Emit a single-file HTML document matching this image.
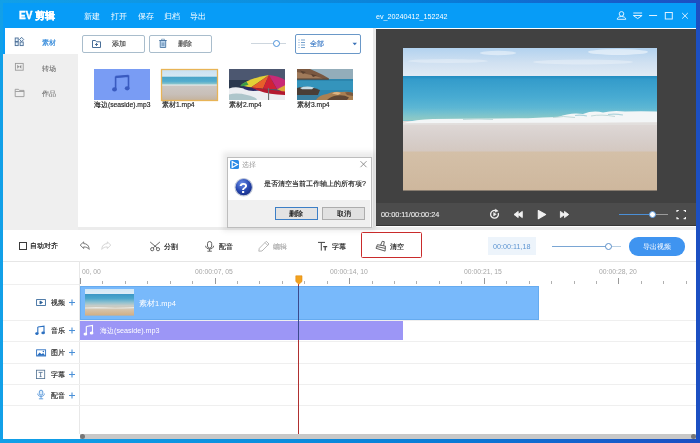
<!DOCTYPE html>
<html><head><meta charset="utf-8">
<style>
*{box-sizing:border-box;margin:0;padding:0}
html,body{width:700px;height:443px;overflow:hidden}
body{position:relative;font-family:"Liberation Sans",sans-serif;background:linear-gradient(90deg,#12a0e8 0%,#0c8ede 40%,#0a7ad6 65%,#1660cc 85%,#1c4fc2 100%);color:#333}
.a{position:absolute}
.t{position:absolute;white-space:nowrap;line-height:1;will-change:transform;-webkit-text-stroke:0.15px currentColor}
svg{position:absolute;overflow:visible}
.btn{position:absolute;border:1px solid #a9bdcc;border-radius:2px;background:#fff}
.rl{position:absolute;left:3px;width:693px;height:1px;background:#efefef}
.tk{position:absolute;top:281px;width:1px;height:3px;background:#b0b0b0}
.tK{position:absolute;top:278px;width:1px;height:6px;background:#999}
.rt{position:absolute;top:268.5px;font-size:6.8px;color:#a6a6a6;white-space:nowrap;line-height:1;will-change:transform}
</style></head><body>
<!-- window -->
<div class="a" style="left:3px;top:3px;width:693px;height:436px;background:#fff"></div>
<!-- title bar -->
<div class="a" style="left:3px;top:3px;width:693px;height:25px;background:#079cf7"></div>
<div class="t" style="left:19.3px;top:11px;font-size:10px;font-weight:bold;color:#fff;-webkit-text-stroke:0.35px #fff">EV 剪辑</div>
<div class="t" style="left:84px;top:13px;font-size:7.5px;color:#fff;-webkit-text-stroke:0">新建</div>
<div class="t" style="left:111px;top:13px;font-size:7.5px;color:#fff;-webkit-text-stroke:0">打开</div>
<div class="t" style="left:137.5px;top:13px;font-size:7.5px;color:#fff;-webkit-text-stroke:0">保存</div>
<div class="t" style="left:164px;top:13px;font-size:7.5px;color:#fff;-webkit-text-stroke:0">归档</div>
<div class="t" style="left:190px;top:13px;font-size:7.5px;color:#fff;-webkit-text-stroke:0">导出</div>
<div class="t" style="left:376.3px;top:13px;font-size:7.2px;color:#fff;-webkit-text-stroke:0">ev_20240412_152242</div>
<svg width="700" height="30" style="left:0;top:0" fill="none" stroke="#dff1ff" stroke-width="1">
  <circle cx="621.5" cy="13.9" r="2.3"/>
  <path d="M617.2 19.3 C617.2 15.6 625.8 15.6 625.8 19.3 Z"/>
  <path d="M633.3 13 H642.1 M633.3 15.5 H642.1 L637.7 18.6 Z"/>
  <path d="M649.1 15.5 H657.1"/>
  <rect x="665.3" y="12.5" width="7" height="6.5"/>
  <path d="M682.2 13 L687.8 18.6 M687.8 13 L682.2 18.6"/>
</svg>

<!-- sidebar -->
<div class="a" style="left:3px;top:28px;width:75px;height:202px;background:#efefef"></div>
<div class="a" style="left:3px;top:28px;width:75px;height:26px;background:#fff"></div>
<div class="a" style="left:3px;top:28px;width:2px;height:26px;background:#079cf7"></div>
<svg width="30" height="80" style="left:0;top:0" fill="none" stroke-width="0.9">
  <g stroke="#4a6d96" fill="#eaf5fd">
    <rect x="15.2" y="38" width="3" height="3.6"/>
    <rect x="15.2" y="42" width="3" height="3.6"/>
    <path d="M21.6 37.3 L23.7 39.5 L21.6 41.6 L19.5 39.5 Z"/>
    <rect x="20.1" y="42" width="3.1" height="3.6"/>
  </g>
  <g stroke="#9a9a9a">
    <rect x="15.4" y="63.4" width="7.8" height="6.8"/>
    <path d="M17.3 64.8 V68.8 L19.2 66.8 Z M21.3 64.8 V68.8 L19.4 66.8 Z" fill="#8a8a8a" stroke="none"/>
    <path d="M15.2 89.3 H18.5 L19.5 90.4 H24 V96.6 H15.2 Z M15.2 91.5 H24"/>
  </g>
</svg>
<div class="t" style="left:42.2px;top:39px;font-size:7px;color:#2a84d8">素材</div>
<div class="t" style="left:42.2px;top:64.6px;font-size:7px;color:#666;-webkit-text-stroke:0.05px #666">转场</div>
<div class="t" style="left:42.2px;top:90px;font-size:7px;color:#666;-webkit-text-stroke:0.05px #666">作品</div>

<!-- media panel -->
<div class="a" style="left:372.5px;top:28px;width:3.5px;height:202px;background:#e9e9e9"></div>
<div class="a" style="left:78px;top:226.7px;width:618px;height:3.2px;background:#ececec"></div>
<div class="btn" style="left:82px;top:35px;width:63px;height:17.8px"></div>
<div class="btn" style="left:149px;top:35px;width:63px;height:17.8px"></div>
<div class="t" style="left:111.6px;top:40.3px;font-size:7px;color:#444">添加</div>
<div class="t" style="left:178px;top:40.3px;font-size:7px;color:#444">删除</div>
<svg width="120" height="20" style="left:80px;top:35px" fill="none" stroke-width="1">
  <path d="M12.5 5.5 H15.5 L16.5 6.8 H20.5 V12.5 H12.5 Z" stroke="#4a6f98"/>
  <path d="M16.5 8 V11 M15 9.5 H18" stroke="#4a6f98"/>
  <path d="M79.2 5.5 H86.7" stroke="#4f7aa6" stroke-width="1"/>
  <path d="M81.5 5 V4.2 H84.5 V5" stroke="#6f95bb" stroke-width="0.8"/>
  <path d="M80.2 6 V12.5 H85.7 V6" stroke="#4f7aa6" fill="#bcd6ee" stroke-width="0.9"/>
  <path d="M82.2 7.5 V11 M83.8 7.5 V11" stroke="#4f7aa6" stroke-width="0.7"/>
</svg>
<!-- zoom slider -->
<div class="a" style="left:251px;top:43px;width:35px;height:1.4px;background:#cdd6de"></div>
<div class="a" style="left:272.8px;top:40px;width:7.2px;height:7.2px;border:1.2px solid #4a90d9;border-radius:50%;background:#fff"></div>
<!-- dropdown -->
<div class="btn" style="left:295px;top:34px;width:65.6px;height:19.6px;border-color:#6a98c8"></div>
<svg width="70" height="20" style="left:295px;top:34px" fill="none" stroke="#6a98c8" stroke-width="0.9">
  <path d="M3.5 6 H4.5 M3.5 8.5 H4.5 M3.5 11 H4.5 M3.5 13.5 H4.5 M6 6 H10 M6 8.5 H10 M6 11 H10 M6 13.5 H10"/>
  <path d="M57.5 8.8 L62 8.8 L59.75 11.3 Z" fill="#3a72b8" stroke="none"/>
</svg>
<div class="t" style="left:310px;top:40.3px;font-size:7px;color:#3274c4">全部</div>

<!-- thumbnails -->
<div class="a" style="left:94px;top:69px;width:56px;height:31px;background:#799cf4"></div>
<svg width="56" height="31" style="left:94px;top:69px">
  <path d="M21.6 20 V8.2 L34.5 7.2 V19" stroke="#3a5bc0" stroke-width="1.6" fill="none"/>
  <path d="M21.6 7.8 L34.5 6.8" stroke="#3a5bc0" stroke-width="2" fill="none"/>
  <ellipse cx="20.5" cy="20.4" rx="2.4" ry="2.1" fill="#3a5bc0"/>
  <ellipse cx="33.2" cy="19.3" rx="2.4" ry="2.1" fill="#3a5bc0"/>
</svg>
<svg width="57" height="32" style="left:161px;top:68.5px">
  <defs>
    <linearGradient id="t1" x1="0" y1="0" x2="0" y2="1">
      <stop offset="0" stop-color="#c8e0f2"/><stop offset="0.22" stop-color="#d6e8f3"/>
      <stop offset="0.24" stop-color="#4aa4c8"/><stop offset="0.38" stop-color="#52acce"/>
      <stop offset="0.46" stop-color="#84c2cc"/><stop offset="0.5" stop-color="#e2eaea"/>
      <stop offset="0.54" stop-color="#ccc6c2"/><stop offset="0.8" stop-color="#c8bfb8"/>
      <stop offset="1" stop-color="#c4b29c"/>
    </linearGradient>
  </defs>
  <rect x="0.5" y="0.5" width="56" height="31" fill="url(#t1)" stroke="#e8b456" stroke-width="1.3"/>
</svg>
<svg width="56" height="31" style="left:229px;top:69px">
  <rect width="56" height="31" fill="#4c5770"/>
  <rect y="11" width="56" height="9" fill="#2b394e"/>
  <path d="M0 19.5 Q6 17.5 12 19 T24 20 T40 21.5 T56 21 V31 H0 Z" fill="#eceef1"/>
  <path d="M0 25.5 Q8 23.5 18 26 T28 31 H0 Z" fill="#9ab8be" opacity="0.75"/>
  <path d="M40 6 Q22 8.5 11.5 16.5 L22 18.5 Z" fill="#e2cf36"/>
  <path d="M11.5 16.5 Q14 14 17.5 12.8 L19.5 15.8 L13 17.6 Z" fill="#3a9a48"/>
  <path d="M40 6 L22 18.5 L34 19.8 Z" fill="#e85e2a"/>
  <path d="M40 6 L34 19.8 L48 20.3 Z" fill="#d02236"/>
  <path d="M40 6 Q50 7 56 11 V17 L48 20.3 Z" fill="#c82a76"/>
  <path d="M48 20.3 L56 16.2 V23.5 Z" fill="#e0a83a"/>
  <path d="M12.5 17.2 L22 18.5 L31 21.2 Q22 23 15.5 20.2 Z" fill="#2c2a66"/>
  <path d="M22 18.5 L56 22.5 V26 Q40 25.5 30 21.8 Z" fill="#b41a30"/>
  <rect x="39" y="19" width="1.1" height="12" fill="#707070"/>
</svg>
<svg width="56" height="31" style="left:297px;top:69px">
  <rect width="56" height="31" fill="#2c86ae"/>
  <rect width="56" height="10" fill="#93adba"/>
  <rect y="12" width="56" height="9" fill="#3494bc"/>
  <path d="M0 0 H13 Q20 3 26 6 L32 9.5 L31 10.5 H0 Z" fill="#7a5840"/>
  <path d="M0 3 Q10 5 18 7 L26 9.5 H0 Z" fill="#a07a5a"/>
  <path d="M3 1.5 L9 3 L6 5 Z M14 5 L20 6.5 L16 8 Z" fill="#5a4030"/>
  <rect y="9.6" width="32" height="1.2" fill="#3a3a38" opacity="0.6"/>
  <path d="M0 19 Q6 17 12 18 Q18 19 23 21 L21 26 H0 Z" fill="#4a3e36"/>
  <path d="M3 19 Q9 16.5 17 18.5 L15 20.2 H5 Z" fill="#c8dce4"/>
  <path d="M0 26 H22 L20 31 H0 Z" fill="#3a7e9e"/>
  <path d="M19 31 Q22 26 30 25 Q36 22 44 23 Q52 22 56 24 V31 Z" fill="#a98052"/>
  <path d="M30 31 Q34 27 40 26.5 Q47 25.5 52 28.5 L50 31 Z" fill="#5e4634"/>
  <path d="M35 24.5 Q39 22 44 24 L41 26 Z" fill="#dcb482"/>
  <path d="M48 23.5 Q52 22.5 56 24 V27 L50 26 Z" fill="#7a5a40"/>
</svg>
<div class="t" style="left:94px;top:102px;font-size:6.7px;color:#222">海边(seaside).mp3</div>
<div class="t" style="left:161.5px;top:102px;font-size:6.7px;color:#222">素材1.mp4</div>
<div class="t" style="left:229px;top:102px;font-size:6.7px;color:#222">素材2.mp4</div>
<div class="t" style="left:297px;top:102px;font-size:6.7px;color:#222">素材3.mp4</div>

<!-- preview -->
<div class="a" style="left:376px;top:29px;width:319.5px;height:197px;background:#414141"></div>
<div class="a" style="left:376px;top:202.5px;width:319.5px;height:23px;background:#4c4c4c;border-bottom:1.2px solid #363636"></div>
<svg width="254" height="142" style="left:403px;top:48px">
  <defs>
    <linearGradient id="sky" x1="0" y1="0" x2="0" y2="1"><stop offset="0" stop-color="#b2d2ef"/><stop offset="0.5" stop-color="#cfe0f1"/><stop offset="1" stop-color="#e2ebf4"/></linearGradient>
    <linearGradient id="sea" x1="0" y1="0" x2="0" y2="1"><stop offset="0" stop-color="#228cc0"/><stop offset="0.08" stop-color="#349ccb"/><stop offset="0.45" stop-color="#48abd2"/><stop offset="0.8" stop-color="#68bdd4"/><stop offset="1" stop-color="#86c8cc"/></linearGradient>
    <linearGradient id="teal" x1="0" y1="0" x2="0" y2="1"><stop offset="0" stop-color="#8cc6c4" stop-opacity="0"/><stop offset="1" stop-color="#98ccc0" stop-opacity="0.7"/></linearGradient>
    <linearGradient id="wet" x1="0" y1="0" x2="0" y2="1"><stop offset="0" stop-color="#e0dad8"/><stop offset="0.5" stop-color="#d8d0cd"/><stop offset="1" stop-color="#d4c8c0"/></linearGradient>
    <linearGradient id="dry" x1="0" y1="0" x2="0" y2="1"><stop offset="0" stop-color="#d4c0a8"/><stop offset="1" stop-color="#ceb79d"/></linearGradient>
  </defs>
  <rect width="254" height="28.5" fill="url(#sky)"/>
  <ellipse cx="95" cy="5" rx="18" ry="2.2" fill="#fff" opacity="0.45"/>
  <ellipse cx="215" cy="4" rx="30" ry="3" fill="#fff" opacity="0.5"/>
  <ellipse cx="45" cy="13" rx="40" ry="2" fill="#fff" opacity="0.3"/>
  <ellipse cx="180" cy="14" rx="50" ry="2.5" fill="#fff" opacity="0.3"/>
  <rect y="28" width="254" height="47" fill="url(#sea)"/>
  <rect y="73" width="254" height="31" fill="url(#wet)"/>
  <rect y="103.5" width="254" height="39" fill="url(#dry)"/>
  <rect y="60" width="254" height="12" fill="url(#teal)"/>
<path d="M0 75 Q12 71.5 30 71 Q50 70.5 75 70.8 Q100 70 125 70.2 Q140 69.5 155 69 Q168 64 180 66 Q190 62 200 64.5 Q210 62 222 63.5 Q238 63 254 63.5 V74.5 Q200 75 130 75 Q60 75.5 0 75.5 Z" fill="#f3f6f7"/>
  <path d="M172 67.5 Q178 66.5 184 68 M205 66.5 Q212 65.5 220 67" stroke="#9ccad4" stroke-width="1.2" fill="none" opacity="0.8"/>
  <path d="M150 69.5 Q160 67.5 172 69.5 M188 68 Q198 66 212 68.5 M60 71.5 Q75 70.5 90 71.5" stroke="#bcd6d6" stroke-width="0.9" fill="none"/>
  <path d="M0 75.5 Q60 75 130 74.8 Q200 74.5 254 74.5 V77 H0 Z" fill="#e2dfdd"/>
</svg>
<div class="t" style="left:381px;top:211px;font-size:7.3px;color:#eee;-webkit-text-stroke:0.1px #eee">00:00:11/00:00:24</div>
<svg width="320" height="30" style="left:376px;top:200px" fill="#f2f2f2" stroke="#f2f2f2" stroke-linejoin="round">
  <path d="M122.2 13 A3.9 3.9 0 1 1 119.8 10.6" fill="none" stroke-width="1.3"/>
  <path d="M119.4 9.1 L122.2 11.1 L119.2 12.2 Z" stroke-width="0.4"/>
  <path d="M117.6 12.6 V16 L120.3 14.3 Z" stroke-width="0.5"/>
  <path d="M138 14.5 L142.2 11.4 V17.6 Z M142 14.5 L146.3 11.4 V17.6 Z" stroke-width="0.9"/>
  <path d="M162.3 10.5 V18.7 L169.6 14.6 Z" stroke-width="1.1"/>
  <path d="M192.7 14.5 L188.5 11.4 V17.6 Z M188.7 14.5 L184.4 11.4 V17.6 Z" stroke-width="0.9"/>
  <path d="M301 12 V10.5 H302.8 M307.6 10.5 H309.4 V12 M309.4 17 V18.6 H307.6 M302.8 18.6 H301 V17" fill="none" stroke-width="1.2" stroke-linejoin="miter"/>
</svg>
<div class="a" style="left:619px;top:214px;width:49px;height:1px;background:#9a9a9a"></div>
<div class="a" style="left:619px;top:214px;width:33px;height:1px;background:#4b8fd6"></div>
<div class="a" style="left:648.5px;top:211px;width:7px;height:7px;border-radius:50%;background:#fff;border:1.5px solid #5a9ae0"></div>

<!-- dialog -->
<div class="a" style="left:223px;top:152px;width:152px;height:79px;background:rgba(0,0,0,0.08);filter:blur(2.5px)"></div>
<div class="a" style="left:227px;top:157px;width:144.5px;height:70.5px;background:#fff;border:1px solid #bdbdbd"></div>
<div class="a" style="left:228px;top:200px;width:142px;height:27px;background:#f0f0f0"></div>
<div class="a" style="left:230px;top:160px;width:9px;height:9px;background:#2a8ae6;border-radius:1.5px"></div>
<svg width="150" height="75" style="left:227px;top:157px">
  <path d="M5.2 4.5 V10.5 L10.5 7.5 Z" fill="none" stroke="#fff" stroke-width="1.2"/>
  <path d="M133.5 4.2 L139.5 10.2 M139.5 4.2 L133.5 10.2" stroke="#777" stroke-width="0.8"/>
  <defs><radialGradient id="qg" cx="40%" cy="30%" r="70%"><stop offset="0" stop-color="#6a8ee8"/><stop offset="0.6" stop-color="#2848b0"/><stop offset="1" stop-color="#182e88"/></radialGradient></defs>
  <circle cx="16.7" cy="30.2" r="8.7" fill="url(#qg)" stroke="#c0c8d8" stroke-width="1.1"/>
</svg>
<div class="t" style="left:239.4px;top:180.6px;font-size:14.5px;font-weight:bold;color:#fff;-webkit-text-stroke:0">?</div>
<div class="t" style="left:242px;top:160.7px;font-size:7.3px;color:#9a9a9a;-webkit-text-stroke:0">选择</div>
<div class="t" style="left:264.3px;top:180px;font-size:7px;color:#222">是否清空当前工作轴上的所有项?</div>
<div class="a" style="left:275px;top:206.5px;width:42.7px;height:13.3px;background:#e3e3e3;border:1px solid #3d7fc6"></div>
<div class="a" style="left:322.3px;top:206.5px;width:42.5px;height:13.3px;background:#e1e1e1;border:1px solid #adadad"></div>
<div class="t" style="left:289.3px;top:210px;font-size:7px;color:#000">删除</div>
<div class="t" style="left:336.5px;top:210px;font-size:7px;color:#000">取消</div>

<!-- timeline toolbar -->

<div class="a" style="left:3px;top:261px;width:693px;height:1px;background:#e6e6e6"></div>
<div class="a" style="left:19.3px;top:242.1px;width:7.6px;height:7.5px;border:1px solid #3a3a3a"></div>
<div class="t" style="left:29.6px;top:242px;font-size:7.2px;color:#111">自动对齐</div>
<svg width="700" height="270" style="left:0;top:0" fill="none" stroke-width="0.9">
  <path d="M80.2 245.1 L83.7 241.9 V243.6 C86.8 243.6 89.2 245.6 89.2 249.4 C87.8 247.6 86.2 246.9 83.7 246.9 V248.5 Z" stroke="#6a6a6a" stroke-linejoin="round"/>
  <path d="M110.8 245.1 L107.3 241.9 V243.6 C104.2 243.6 101.8 245.6 101.8 249.4 C103.2 247.6 104.8 246.9 107.3 246.9 V248.5 Z" stroke="#d0d0d0" stroke-linejoin="round"/>
  <g stroke="#555" stroke-width="0.9">
    <circle cx="152.2" cy="249.2" r="1.6"/><circle cx="158" cy="249.2" r="1.6"/>
    <path d="M150.2 242 L157 247.8 M159.9 242 L153.2 247.8"/>
  </g>
  <g stroke="#555" stroke-width="0.9">
    <rect x="207.5" y="241.5" width="4.2" height="6.6" rx="2.1"/>
    <path d="M205.6 245.8 C205.6 250 213.6 250 213.6 245.8 M209.6 248.8 V251 M207.4 251.2 H211.8"/>
  </g>
  <path d="M258.8 251.2 L259.3 248.3 L266.3 241.3 L269 244 L262 251 Z M265 242.6 L267.7 245.3" stroke="#b0b0b0"/>
  <g stroke="#444" stroke-width="1">
    <path d="M318 242.4 H325 M321.3 242.4 V250.6"/>
    <path d="M323.2 246.7 H327.2 M325.2 246.7 V250.6" stroke-width="1.3"/>
  </g>
  <g stroke="#444" stroke-width="0.85" stroke-linejoin="round">
    <path d="M377.4 244.7 L385.4 246.1 L385.1 251.1 L376 248.3 Z M377 246.6 L385.3 248.4"/>
    <path d="M380.6 245.2 L382.2 241.3 L384.3 241.7 L383.6 245.7"/>
  </g>
</svg>
<div class="t" style="left:164.2px;top:243px;font-size:7.2px;color:#1a1a1a">分割</div>
<div class="t" style="left:218.9px;top:243px;font-size:7.2px;color:#1a1a1a">配音</div>
<div class="t" style="left:272.8px;top:243px;font-size:7.2px;color:#aaa">编辑</div>
<div class="t" style="left:331.6px;top:243px;font-size:7.2px;color:#1a1a1a">字幕</div>
<div class="t" style="left:389.6px;top:243px;font-size:7.2px;color:#1a1a1a">清空</div>
<div class="a" style="left:361.2px;top:232.3px;width:60.4px;height:26px;border:1.8px solid #c92b2b;border-radius:1.5px"></div>
<!-- time box -->
<div class="a" style="left:488px;top:237px;width:48px;height:18px;background:#edf4fb"></div>
<div class="t" style="left:493.4px;top:243px;font-size:7.2px;color:#5f96d2;-webkit-text-stroke:0">00:00:11,18</div>
<!-- zoom slider -->
<div class="a" style="left:551.5px;top:246px;width:57px;height:1px;background:#7aa6d4"></div>
<div class="a" style="left:608.4px;top:246px;width:12.2px;height:1px;background:#b8cfe3"></div>
<div class="a" style="left:604.9px;top:242.5px;width:7px;height:7px;border-radius:50%;background:#fff;border:1.3px solid #5a8ec8"></div>
<!-- export -->
<div class="a" style="left:629px;top:237.4px;width:56px;height:18.2px;border-radius:9.1px;background:#3f94f0"></div>
<div class="t" style="left:642.6px;top:243px;font-size:7.2px;color:#fff;-webkit-text-stroke:0">导出视频</div>

<!-- timeline -->
<div class="a" style="left:79px;top:261px;width:1px;height:173px;background:#e8e8e8"></div>
<div class="rl" style="top:284px;width:76px"></div>
<div class="rl" style="top:319.5px"></div>
<div class="rl" style="top:340.5px"></div>
<div class="rl" style="top:362.8px"></div>
<div class="rl" style="top:384px"></div>
<div class="rl" style="top:405.3px"></div>
<!-- ruler -->
<div class="tK" style="left:80.0px"></div><div class="tk" style="left:102.4px"></div><div class="tk" style="left:124.9px"></div><div class="tk" style="left:147.3px"></div><div class="tk" style="left:169.7px"></div><div class="tk" style="left:192.2px"></div><div class="tK" style="left:214.6px"></div><div class="tk" style="left:237.0px"></div><div class="tk" style="left:259.4px"></div><div class="tk" style="left:281.9px"></div><div class="tk" style="left:304.3px"></div><div class="tk" style="left:326.7px"></div><div class="tK" style="left:349.2px"></div><div class="tk" style="left:371.6px"></div><div class="tk" style="left:394.0px"></div><div class="tk" style="left:416.4px"></div><div class="tk" style="left:438.9px"></div><div class="tk" style="left:461.3px"></div><div class="tK" style="left:483.7px"></div><div class="tk" style="left:506.2px"></div><div class="tk" style="left:528.6px"></div><div class="tk" style="left:551.0px"></div><div class="tk" style="left:573.5px"></div><div class="tk" style="left:595.9px"></div><div class="tK" style="left:618.3px"></div><div class="tk" style="left:640.8px"></div><div class="tk" style="left:663.2px"></div><div class="tk" style="left:685.6px"></div>
<div class="rt" style="left:81.6px">00, 00</div>
<div class="rt" style="left:195px">00:00:07, 05</div>
<div class="rt" style="left:329.6px">00:00:14, 10</div>
<div class="rt" style="left:464.2px">00:00:21, 15</div>
<div class="rt" style="left:598.8px">00:00:28, 20</div>

<!-- track headers -->
<svg width="80" height="120" style="left:0;top:290px" fill="none" stroke-width="1">
  <g stroke="#2f6398" stroke-width="0.85">
    <rect x="36.6" y="9.6" width="8.8" height="5.9"/>
    <path d="M40 11 V14 L42.5 12.5 Z" fill="#2a5f9a"/>
  </g>
  <g stroke="#2a6fc0" stroke-width="1.1">
    <path d="M37.8 37 L44 36.2 V43 M37.8 37 V43.8"/>
    <ellipse cx="36.9" cy="43.6" rx="1.2" ry="0.9" fill="#2a6fc0"/>
    <ellipse cx="43.1" cy="42.9" rx="1.2" ry="0.9" fill="#2a6fc0"/>
  </g>
  <g>
    <rect x="36.6" y="59.8" width="9" height="6.2" fill="#fff" stroke="#2a6fc0" stroke-width="0.9"/>
    <path d="M36.8 65.8 L39.6 62.4 L41.6 64.3 L43.1 63 L45.4 65.8 Z" fill="#2a6fc0"/>
    <circle cx="43.4" cy="61.6" r="0.75" fill="#2a6fc0"/>
  </g>
  <g stroke="#4f6f90" stroke-width="0.8">
    <rect x="36.5" y="80.2" width="8.2" height="8.4"/>
    <path d="M38.6 82.4 H42.6 M40.6 82.4 V86.6 M39.6 86.6 H41.6"/>
  </g>
  <g stroke="#4a8ed6" stroke-width="0.85">
    <rect x="39.3" y="100.2" width="3.5" height="5" rx="1.75" fill="#dcecfa"/>
    <path d="M37.7 103.6 C37.7 107.4 44.4 107.4 44.4 103.6 M41.05 106.4 V108.6 M38.9 108.8 H43.2"/>
  </g>
</svg>
<div class="t" style="left:51px;top:299px;font-size:7.2px;color:#222">视频</div>
<div class="t" style="left:51px;top:327px;font-size:7.2px;color:#222">音乐</div>
<div class="t" style="left:51px;top:349px;font-size:7.2px;color:#222">图片</div>
<div class="t" style="left:51px;top:371px;font-size:7.2px;color:#222">字幕</div>
<div class="t" style="left:51px;top:392px;font-size:7.2px;color:#222">配音</div>
<svg width="80" height="120" style="left:0;top:290px" stroke="#4a90d8" stroke-width="1.1">
  <path d="M69 12.5 H75 M72 9.5 V15.5"/>
  <path d="M69 40.5 H75 M72 37.5 V43.5"/>
  <path d="M69 62.5 H75 M72 59.5 V65.5"/>
  <path d="M69 84.5 H75 M72 81.5 V87.5"/>
  <path d="M69 105.5 H75 M72 102.5 V108.5"/>
</svg>

<!-- clips -->
<div class="a" style="left:80px;top:285.5px;width:459px;height:34px;background:#78b9fb;border:1px solid #66abef"></div>
<svg width="49" height="27" style="left:85px;top:289px">
  <defs><linearGradient id="ct" x1="0" y1="0" x2="0" y2="1">
    <stop offset="0" stop-color="#d2e8f6"/><stop offset="0.17" stop-color="#dcecf6"/>
    <stop offset="0.2" stop-color="#3c98c6"/><stop offset="0.35" stop-color="#4aa6cc"/>
    <stop offset="0.5" stop-color="#8cc0d0"/><stop offset="0.62" stop-color="#c4ccc8"/>
    <stop offset="0.75" stop-color="#d6c6b0"/><stop offset="1" stop-color="#d2ae82"/>
  </linearGradient></defs>
  <rect width="49" height="26.6" fill="url(#ct)"/>
  <path d="M0 18.5 Q10 17.5 20 18.3 T49 18 V19.2 Q30 19.6 0 19.6 Z" fill="#f4f6f6" opacity="0.7"/>
</svg>
<div class="t" style="left:139px;top:299.5px;font-size:7.5px;color:#fff;-webkit-text-stroke:0">素材1.mp4</div>
<div class="a" style="left:80px;top:321px;width:322.6px;height:19px;background:#9c96f6"></div>
<svg width="20" height="20" style="left:80px;top:321px" fill="none" stroke="#fff" stroke-width="1.1">
  <path d="M6.3 5.5 L12.5 4.5 V12 M6.3 5.5 V13"/>
  <ellipse cx="5.4" cy="13" rx="1.3" ry="1" fill="#fff"/>
  <ellipse cx="11.6" cy="12" rx="1.3" ry="1" fill="#fff"/>
</svg>
<div class="t" style="left:99.7px;top:326.6px;font-size:7.2px;color:#fff;-webkit-text-stroke:0">海边(seaside).mp3</div>

<!-- playhead -->
<div class="a" style="left:297.9px;top:284px;width:1.5px;height:150px;background:#b03030"></div>
<div class="a" style="left:297.9px;top:285.5px;width:1.5px;height:54.5px;background:#3c4a8c"></div>
<svg width="10" height="12" style="left:294.5px;top:275px"><path d="M0.8 0.8 H7 V6.5 L3.9 9.3 L0.8 6.5 Z" fill="#f2a21e" stroke="#e08a10" stroke-width="0.6"/></svg>

<!-- scrollbar -->
<div class="a" style="left:80px;top:434px;width:616px;height:5px;background:#c8c8c8"></div>
<div class="a" style="left:80px;top:434px;width:5px;height:5px;border-radius:50%;background:#777"></div>
<div class="a" style="left:691px;top:434px;width:5px;height:5px;border-radius:50%;background:#777"></div>

</body></html>
